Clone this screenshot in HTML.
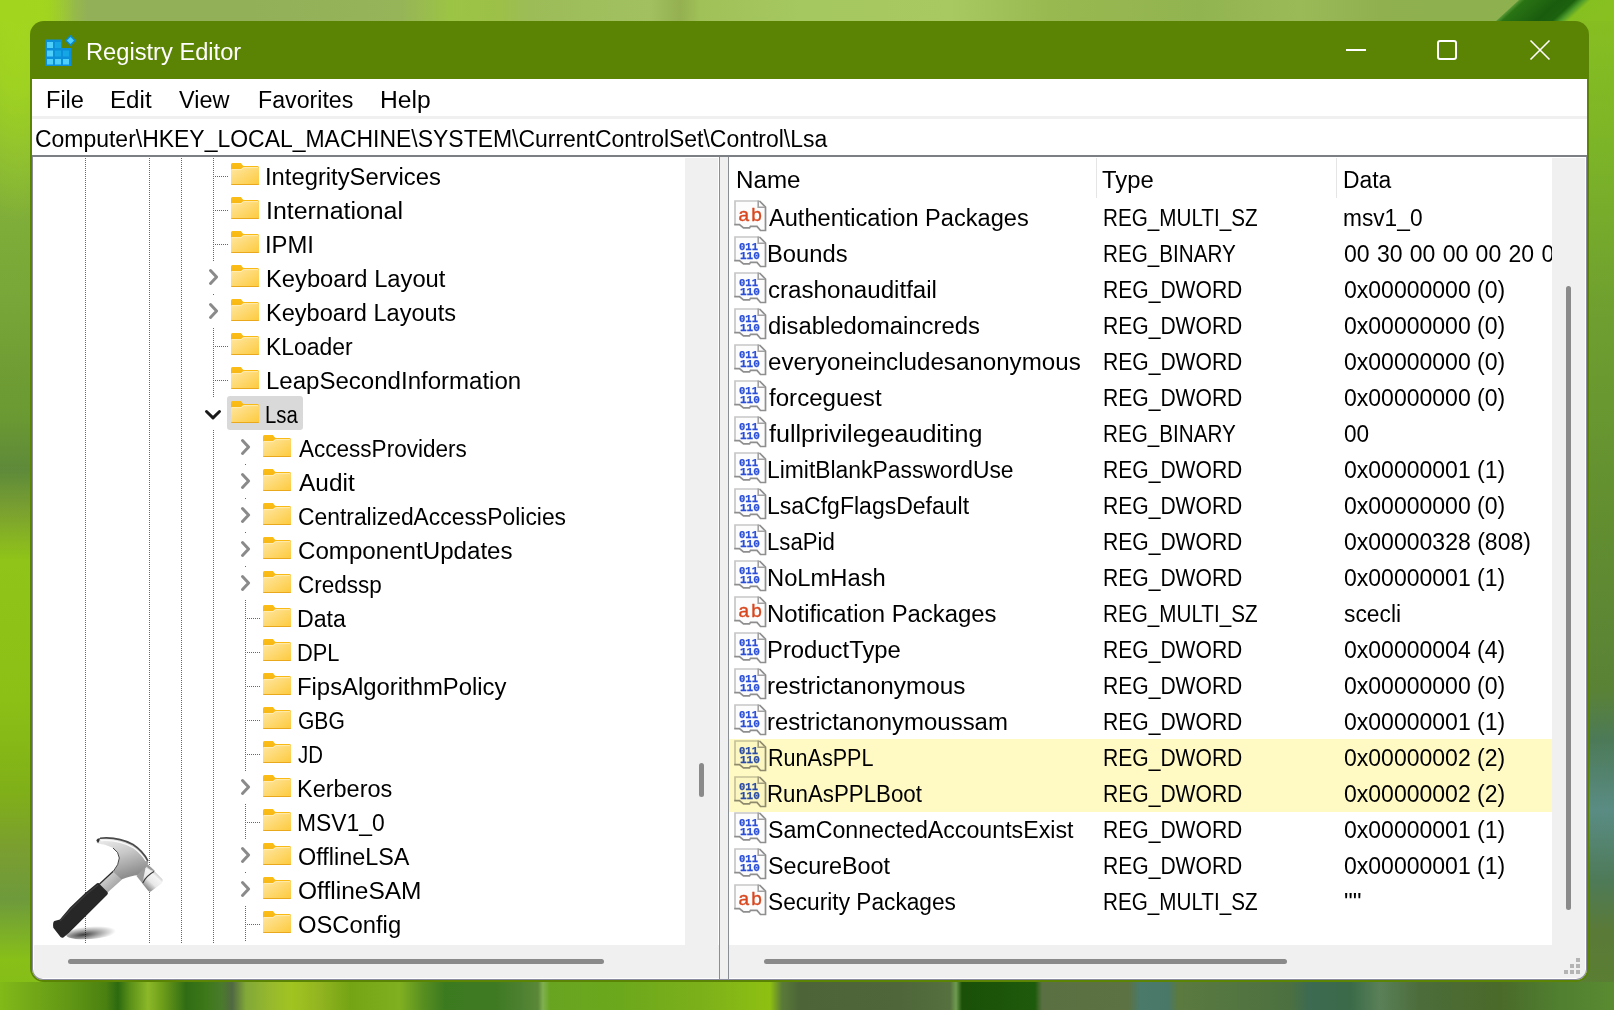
<!DOCTYPE html><html><head><meta charset="utf-8"><style>
*{margin:0;padding:0;box-sizing:border-box}
html,body{width:1614px;height:1010px;overflow:hidden}
body{position:relative;font-family:"Liberation Sans",sans-serif;background:#7aa830}
.a{position:absolute}
.t{position:absolute;font-size:23px;line-height:23px;white-space:nowrap;color:#000}
.dv{position:absolute;width:1px;background:repeating-linear-gradient(to bottom,#666 0 1px,transparent 1px 2px)}
.dh{position:absolute;height:1px;background:repeating-linear-gradient(to right,#666 0 1px,transparent 1px 2px)}
.sb{position:absolute;background:#8a8a8a;border-radius:3px}
svg{position:absolute;overflow:visible}
</style></head><body>
<svg width="0" height="0" style="position:absolute">
<defs>
<linearGradient id="fg" x1="0" y1="0" x2="1" y2="1"><stop offset="0" stop-color="#ffe7a3"/><stop offset="1" stop-color="#fdca3c"/></linearGradient>
<linearGradient id="tg" x1="0" y1="0" x2="0" y2="1"><stop offset="0" stop-color="#fbbd16"/><stop offset="1" stop-color="#f0aa12"/></linearGradient>


</defs></svg>
<div class="a" style="left:0px;top:0px;width:60px;height:1010px;background:linear-gradient(to bottom,#a0d020 0,#90c030 40px,#86b43a 150px,#78a638 300px,#6a9832 420px,#5e8a3a 470px,#7aa030 510px,#90c418 560px,#8cc016 700px,#80b018 790px,#7a9e30 850px,#6e9a3c 900px,#88c018 960px,#84bc18 1010px)"></div>
<div class="a" style="left:1570px;top:0px;width:44px;height:1010px;background:linear-gradient(to bottom,#88c020 0,#7cb428 150px,#6e9e30 320px,#628e30 520px,#5a8236 690px,#4c7a58 740px,#5a8c84 810px,#4e7a58 880px,#5a7a38 930px,#5a8030 1010px)"></div>
<div class="a" style="left:0px;top:0px;width:1614px;height:21px;background:linear-gradient(to right,#a2d41e 0px,#a0d020 45px,#98bc48 62px,#92b058 75px,#92b058 250px,#96b458 400px,#9cc444 450px,#9cc048 500px,#9cbc58 530px,#a2c060 650px,#94b050 680px,#a0c058 700px,#a6c860 800px,#a8c862 950px,#98b850 1050px,#92b450 1200px,#9aba58 1300px,#90b050 1380px,#8cb04c 1614px)"></div>
<div class="a" style="left:1519px;top:0;width:120px;height:21px;transform-origin:0 0;transform:skewX(-47.5deg);background:linear-gradient(to right,#5a9a38 0,#2a7414 6px,#1a5c0e 40px,#1c620e 56px,#4c9a2a 64px,#86c020 72px,#88c020 120px)"></div>
<div class="a" style="left:0px;top:982px;width:1614px;height:28px;background:linear-gradient(to right,#82ba18 0px,#76ac18 25px,#5e9414 75px,#4a8010 106px,#2c6a10 118px,#5a9018 130px,#8cb828 148px,#6a9a18 164px,#306c14 186px,#3c7818 205px,#4a7a2c 222px,#506842 232px,#82a838 246px,#98ba2c 272px,#a2c420 292px,#92b420 320px,#74a414 350px,#80b020 400px,#5a9020 422px,#3c7a20 445px,#3e7a22 495px,#4c8030 520px,#5a8838 538px,#80b050 543px,#68a420 550px,#6ca81c 620px,#7cb01a 700px,#8ec012 770px,#5a7a38 782px,#4c6438 800px,#4e663a 900px,#56703e 950px,#6e9c50 956px,#1a5008 962px,#1e5a0c 1035px,#5a7042 1042px,#5c7242 1128px,#4a7a6a 1140px,#4a7868 1168px,#5a7a40 1178px,#4c7040 1290px,#3c6a52 1310px,#3a6a48 1350px,#5a8058 1380px,#4c6c3a 1420px,#4a6a2a 1500px,#508030 1560px,#5a8a30 1614px)"></div>
<div class="a" style="left:0;top:0;width:160px;height:260px;background:radial-gradient(ellipse 70px 200px at 18px 20px,rgba(162,214,30,1) 0,rgba(162,214,30,0.85) 35%,rgba(162,214,30,0) 100%)"></div>
<div class="a" style="left:30px;top:21px;width:1559px;height:961px;border-radius:14px 14px 14px 14px;background:#5b8304"></div>
<svg style="left:45px;top:31px" width="30" height="36" viewBox="0 0 30 36">
<rect x="0" y="8.5" width="17" height="26.5" fill="#0a8fd8"/>
<rect x="17" y="17" width="9" height="18" fill="#0a8fd8"/>
<g fill="#4fd0fb"><rect x="2" y="11" width="6" height="6"/><rect x="2" y="19.5" width="6" height="6"/><rect x="2" y="28" width="6" height="5.5"/>
<rect x="10" y="28" width="6" height="5.5"/><rect x="18" y="28" width="6" height="5.5"/></g>
<g fill="#15a6e6"><rect x="10" y="11" width="6" height="6"/><rect x="10" y="19.5" width="6" height="6"/><rect x="18" y="19.5" width="6" height="6"/></g>
<rect x="21.5" y="5.5" width="8" height="8" transform="rotate(45 25.5 9.5)" fill="#0a8ad0"/>
<rect x="23" y="7" width="5" height="5" transform="rotate(45 25.5 9.5)" fill="#4fd0fb"/>
</svg>
<div class="t" style="left:86.05px;top:40.7px;transform:scaleX(1.0291);transform-origin:0 0;color:#fff">Registry Editor</div>
<div class="a" style="left:1346px;top:49px;width:20px;height:2px;background:#fff"></div>
<div class="a" style="left:1437px;top:40px;width:20px;height:20px;border:2px solid #fff;border-radius:3px"></div>
<svg style="left:1530px;top:40px" width="20" height="20"><path d="M0.5 0.5L19.5 19.5M19.5 0.5L0.5 19.5" stroke="#fff" stroke-width="1.6"/></svg>
<div class="a" style="left:0;top:0;width:1614px;height:1010px;clip-path:inset(79px 27px 30px 32px round 0 0 11px 11px)">
<div class="a" style="left:32px;top:79px;width:1555px;height:901px;background:#fff"></div>
<div class="t" style="left:45.54px;top:89.3px;transform:scaleX(1.0239);transform-origin:0 0;">File</div>
<div class="t" style="left:109.88px;top:89.3px;transform:scaleX(1.0497);transform-origin:0 0;">Edit</div>
<div class="t" style="left:179.40px;top:89.3px;transform:scaleX(1.0204);transform-origin:0 0;">View</div>
<div class="t" style="left:257.79px;top:89.3px;transform:scaleX(1.0077);transform-origin:0 0;">Favorites</div>
<div class="t" style="left:379.67px;top:89.3px;transform:scaleX(1.0711);transform-origin:0 0;">Help</div>
<div class="a" style="left:32px;top:116px;width:1555px;height:3px;background:#f0f0f0"></div>
<div class="t" style="left:34.70px;top:128.4px;transform:scaleX(0.9980);transform-origin:0 0;">Computer\HKEY_LOCAL_MACHINE\SYSTEM\CurrentControlSet\Control\Lsa</div>
<div class="a" style="left:32px;top:155px;width:1555px;height:2px;background:#7c7f83"></div>
<div class="a" style="left:685px;top:158px;width:33px;height:787px;background:#f0f0f0"></div>
<div class="a" style="left:34px;top:945px;width:685px;height:33px;background:#f0f0f0"></div>
<div class="sb" style="left:699px;top:763px;width:5px;height:34px"></div>
<div class="sb" style="left:68px;top:959px;width:536px;height:5px"></div>
<div class="a" style="left:719px;top:157px;width:1px;height:822px;background:#8a8e95"></div>
<div class="a" style="left:720px;top:157px;width:8px;height:822px;background:#f0f0f0"></div>
<div class="a" style="left:728px;top:157px;width:1px;height:822px;background:#8a8e95"></div>
<div class="dv" style="left:85px;top:158px;height:786px"></div>
<div class="dv" style="left:149px;top:158px;height:786px"></div>
<div class="dv" style="left:181px;top:158px;height:786px"></div>
<div class="dv" style="left:213px;top:158px;height:2px"></div>
<div class="dv" style="left:213px;top:160px;height:34px"></div>
<div class="dh" style="left:213px;top:176px;width:15px"></div>
<svg style="left:231px;top:163px" width="28" height="22" viewBox="0 0 28 22"><path d="M1.5 0H9.8L12.3 3H26.5Q28 3 28 4.5V20.5Q28 22 26.5 22H1.5Q0 22 0 20.5V1.5Q0 0 1.5 0Z" fill="url(#tg)"/><path d="M0 6.5Q0 6 1 6H10L12.3 4H27Q28 4 28 5V20.5Q28 22 26.5 22H1.5Q0 22 0 20.5Z" fill="url(#fg)"/><path d="M0 21H28V20.8Q28 22 26.5 22H1.5Q0 22 0 20.8Z" fill="#eaa91c"/><path d="M1 6.6H10.2L12.5 4.6H27" stroke="#fff3c8" stroke-width="0.8" fill="none" opacity="0.8"/></svg>
<div class="t" style="left:264.83px;top:166.2px;transform:scaleX(1.0341);transform-origin:0 0;">IntegrityServices</div>
<div class="dv" style="left:213px;top:194px;height:34px"></div>
<div class="dh" style="left:213px;top:210px;width:15px"></div>
<svg style="left:231px;top:197px" width="28" height="22" viewBox="0 0 28 22"><path d="M1.5 0H9.8L12.3 3H26.5Q28 3 28 4.5V20.5Q28 22 26.5 22H1.5Q0 22 0 20.5V1.5Q0 0 1.5 0Z" fill="url(#tg)"/><path d="M0 6.5Q0 6 1 6H10L12.3 4H27Q28 4 28 5V20.5Q28 22 26.5 22H1.5Q0 22 0 20.5Z" fill="url(#fg)"/><path d="M0 21H28V20.8Q28 22 26.5 22H1.5Q0 22 0 20.8Z" fill="#eaa91c"/><path d="M1 6.6H10.2L12.5 4.6H27" stroke="#fff3c8" stroke-width="0.8" fill="none" opacity="0.8"/></svg>
<div class="t" style="left:265.74px;top:200.2px;transform:scaleX(1.0822);transform-origin:0 0;">International</div>
<div class="dv" style="left:213px;top:228px;height:34px"></div>
<div class="dh" style="left:213px;top:244px;width:15px"></div>
<svg style="left:231px;top:231px" width="28" height="22" viewBox="0 0 28 22"><path d="M1.5 0H9.8L12.3 3H26.5Q28 3 28 4.5V20.5Q28 22 26.5 22H1.5Q0 22 0 20.5V1.5Q0 0 1.5 0Z" fill="url(#tg)"/><path d="M0 6.5Q0 6 1 6H10L12.3 4H27Q28 4 28 5V20.5Q28 22 26.5 22H1.5Q0 22 0 20.5Z" fill="url(#fg)"/><path d="M0 21H28V20.8Q28 22 26.5 22H1.5Q0 22 0 20.8Z" fill="#eaa91c"/><path d="M1 6.6H10.2L12.5 4.6H27" stroke="#fff3c8" stroke-width="0.8" fill="none" opacity="0.8"/></svg>
<div class="t" style="left:264.82px;top:234.2px;transform:scaleX(1.0357);transform-origin:0 0;">IPMI</div>
<div class="dv" style="left:213px;top:294px;height:1px"></div>
<svg style="left:209px;top:269.4px" width="11" height="18"><path d="M1.5 1.5L7.6 8L1.5 14.5" stroke="#8a8a8a" stroke-width="3" fill="none" stroke-linecap="round" stroke-linejoin="round"/></svg>
<svg style="left:231px;top:265px" width="28" height="22" viewBox="0 0 28 22"><path d="M1.5 0H9.8L12.3 3H26.5Q28 3 28 4.5V20.5Q28 22 26.5 22H1.5Q0 22 0 20.5V1.5Q0 0 1.5 0Z" fill="url(#tg)"/><path d="M0 6.5Q0 6 1 6H10L12.3 4H27Q28 4 28 5V20.5Q28 22 26.5 22H1.5Q0 22 0 20.5Z" fill="url(#fg)"/><path d="M0 21H28V20.8Q28 22 26.5 22H1.5Q0 22 0 20.8Z" fill="#eaa91c"/><path d="M1 6.6H10.2L12.5 4.6H27" stroke="#fff3c8" stroke-width="0.8" fill="none" opacity="0.8"/></svg>
<div class="t" style="left:265.73px;top:268.2px;transform:scaleX(1.0316);transform-origin:0 0;">Keyboard Layout</div>
<div class="dv" style="left:213px;top:328px;height:1px"></div>
<svg style="left:209px;top:303.4px" width="11" height="18"><path d="M1.5 1.5L7.6 8L1.5 14.5" stroke="#8a8a8a" stroke-width="3" fill="none" stroke-linecap="round" stroke-linejoin="round"/></svg>
<svg style="left:231px;top:299px" width="28" height="22" viewBox="0 0 28 22"><path d="M1.5 0H9.8L12.3 3H26.5Q28 3 28 4.5V20.5Q28 22 26.5 22H1.5Q0 22 0 20.5V1.5Q0 0 1.5 0Z" fill="url(#tg)"/><path d="M0 6.5Q0 6 1 6H10L12.3 4H27Q28 4 28 5V20.5Q28 22 26.5 22H1.5Q0 22 0 20.5Z" fill="url(#fg)"/><path d="M0 21H28V20.8Q28 22 26.5 22H1.5Q0 22 0 20.8Z" fill="#eaa91c"/><path d="M1 6.6H10.2L12.5 4.6H27" stroke="#fff3c8" stroke-width="0.8" fill="none" opacity="0.8"/></svg>
<div class="t" style="left:265.75px;top:302.2px;transform:scaleX(1.0246);transform-origin:0 0;">Keyboard Layouts</div>
<div class="dv" style="left:213px;top:330px;height:34px"></div>
<div class="dh" style="left:213px;top:346px;width:15px"></div>
<svg style="left:231px;top:333px" width="28" height="22" viewBox="0 0 28 22"><path d="M1.5 0H9.8L12.3 3H26.5Q28 3 28 4.5V20.5Q28 22 26.5 22H1.5Q0 22 0 20.5V1.5Q0 0 1.5 0Z" fill="url(#tg)"/><path d="M0 6.5Q0 6 1 6H10L12.3 4H27Q28 4 28 5V20.5Q28 22 26.5 22H1.5Q0 22 0 20.5Z" fill="url(#fg)"/><path d="M0 21H28V20.8Q28 22 26.5 22H1.5Q0 22 0 20.8Z" fill="#eaa91c"/><path d="M1 6.6H10.2L12.5 4.6H27" stroke="#fff3c8" stroke-width="0.8" fill="none" opacity="0.8"/></svg>
<div class="t" style="left:265.81px;top:336.2px;transform:scaleX(0.9965);transform-origin:0 0;">KLoader</div>
<div class="dv" style="left:213px;top:364px;height:34px"></div>
<div class="dh" style="left:213px;top:380px;width:15px"></div>
<svg style="left:231px;top:367px" width="28" height="22" viewBox="0 0 28 22"><path d="M1.5 0H9.8L12.3 3H26.5Q28 3 28 4.5V20.5Q28 22 26.5 22H1.5Q0 22 0 20.5V1.5Q0 0 1.5 0Z" fill="url(#tg)"/><path d="M0 6.5Q0 6 1 6H10L12.3 4H27Q28 4 28 5V20.5Q28 22 26.5 22H1.5Q0 22 0 20.5Z" fill="url(#fg)"/><path d="M0 21H28V20.8Q28 22 26.5 22H1.5Q0 22 0 20.8Z" fill="#eaa91c"/><path d="M1 6.6H10.2L12.5 4.6H27" stroke="#fff3c8" stroke-width="0.8" fill="none" opacity="0.8"/></svg>
<div class="t" style="left:265.70px;top:370.2px;transform:scaleX(1.0448);transform-origin:0 0;">LeapSecondInformation</div>
<div class="dv" style="left:213px;top:430px;height:1px"></div>
<div class="a" style="left:227px;top:396px;width:76px;height:34px;background:#d9d9d9;border-radius:3px"></div>
<svg style="left:205px;top:409.7px" width="18" height="12"><path d="M1.5 1.5L8 7.8L14.5 1.5" stroke="#1a1a1a" stroke-width="3" fill="none" stroke-linecap="round" stroke-linejoin="round"/></svg>
<svg style="left:231px;top:401px" width="28" height="22" viewBox="0 0 28 22"><path d="M1.5 0H9.8L12.3 3H26.5Q28 3 28 4.5V20.5Q28 22 26.5 22H1.5Q0 22 0 20.5V1.5Q0 0 1.5 0Z" fill="url(#tg)"/><path d="M0 6.5Q0 6 1 6H10L12.3 4H27Q28 4 28 5V20.5Q28 22 26.5 22H1.5Q0 22 0 20.5Z" fill="url(#fg)"/><path d="M0 21H28V20.8Q28 22 26.5 22H1.5Q0 22 0 20.8Z" fill="#eaa91c"/><path d="M1 6.6H10.2L12.5 4.6H27" stroke="#fff3c8" stroke-width="0.8" fill="none" opacity="0.8"/></svg>
<div class="t" style="left:265.29px;top:404.2px;transform:scaleX(0.8841);transform-origin:0 0;">Lsa</div>
<div class="dv" style="left:245px;top:464px;height:1px"></div>
<svg style="left:241px;top:439.4px" width="11" height="18"><path d="M1.5 1.5L7.6 8L1.5 14.5" stroke="#8a8a8a" stroke-width="3" fill="none" stroke-linecap="round" stroke-linejoin="round"/></svg>
<svg style="left:263px;top:435px" width="28" height="22" viewBox="0 0 28 22"><path d="M1.5 0H9.8L12.3 3H26.5Q28 3 28 4.5V20.5Q28 22 26.5 22H1.5Q0 22 0 20.5V1.5Q0 0 1.5 0Z" fill="url(#tg)"/><path d="M0 6.5Q0 6 1 6H10L12.3 4H27Q28 4 28 5V20.5Q28 22 26.5 22H1.5Q0 22 0 20.5Z" fill="url(#fg)"/><path d="M0 21H28V20.8Q28 22 26.5 22H1.5Q0 22 0 20.8Z" fill="#eaa91c"/><path d="M1 6.6H10.2L12.5 4.6H27" stroke="#fff3c8" stroke-width="0.8" fill="none" opacity="0.8"/></svg>
<div class="t" style="left:299.10px;top:438.2px;transform:scaleX(0.9795);transform-origin:0 0;">AccessProviders</div>
<div class="dv" style="left:245px;top:498px;height:1px"></div>
<svg style="left:241px;top:473.4px" width="11" height="18"><path d="M1.5 1.5L7.6 8L1.5 14.5" stroke="#8a8a8a" stroke-width="3" fill="none" stroke-linecap="round" stroke-linejoin="round"/></svg>
<svg style="left:263px;top:469px" width="28" height="22" viewBox="0 0 28 22"><path d="M1.5 0H9.8L12.3 3H26.5Q28 3 28 4.5V20.5Q28 22 26.5 22H1.5Q0 22 0 20.5V1.5Q0 0 1.5 0Z" fill="url(#tg)"/><path d="M0 6.5Q0 6 1 6H10L12.3 4H27Q28 4 28 5V20.5Q28 22 26.5 22H1.5Q0 22 0 20.5Z" fill="url(#fg)"/><path d="M0 21H28V20.8Q28 22 26.5 22H1.5Q0 22 0 20.8Z" fill="#eaa91c"/><path d="M1 6.6H10.2L12.5 4.6H27" stroke="#fff3c8" stroke-width="0.8" fill="none" opacity="0.8"/></svg>
<div class="t" style="left:298.70px;top:472.2px;transform:scaleX(1.0620);transform-origin:0 0;">Audit</div>
<div class="dv" style="left:245px;top:532px;height:1px"></div>
<svg style="left:241px;top:507.4px" width="11" height="18"><path d="M1.5 1.5L7.6 8L1.5 14.5" stroke="#8a8a8a" stroke-width="3" fill="none" stroke-linecap="round" stroke-linejoin="round"/></svg>
<svg style="left:263px;top:503px" width="28" height="22" viewBox="0 0 28 22"><path d="M1.5 0H9.8L12.3 3H26.5Q28 3 28 4.5V20.5Q28 22 26.5 22H1.5Q0 22 0 20.5V1.5Q0 0 1.5 0Z" fill="url(#tg)"/><path d="M0 6.5Q0 6 1 6H10L12.3 4H27Q28 4 28 5V20.5Q28 22 26.5 22H1.5Q0 22 0 20.5Z" fill="url(#fg)"/><path d="M0 21H28V20.8Q28 22 26.5 22H1.5Q0 22 0 20.8Z" fill="#eaa91c"/><path d="M1 6.6H10.2L12.5 4.6H27" stroke="#fff3c8" stroke-width="0.8" fill="none" opacity="0.8"/></svg>
<div class="t" style="left:297.71px;top:506.2px;transform:scaleX(0.9937);transform-origin:0 0;">CentralizedAccessPolicies</div>
<div class="dv" style="left:245px;top:566px;height:1px"></div>
<svg style="left:241px;top:541.4px" width="11" height="18"><path d="M1.5 1.5L7.6 8L1.5 14.5" stroke="#8a8a8a" stroke-width="3" fill="none" stroke-linecap="round" stroke-linejoin="round"/></svg>
<svg style="left:263px;top:537px" width="28" height="22" viewBox="0 0 28 22"><path d="M1.5 0H9.8L12.3 3H26.5Q28 3 28 4.5V20.5Q28 22 26.5 22H1.5Q0 22 0 20.5V1.5Q0 0 1.5 0Z" fill="url(#tg)"/><path d="M0 6.5Q0 6 1 6H10L12.3 4H27Q28 4 28 5V20.5Q28 22 26.5 22H1.5Q0 22 0 20.5Z" fill="url(#fg)"/><path d="M0 21H28V20.8Q28 22 26.5 22H1.5Q0 22 0 20.8Z" fill="#eaa91c"/><path d="M1 6.6H10.2L12.5 4.6H27" stroke="#fff3c8" stroke-width="0.8" fill="none" opacity="0.8"/></svg>
<div class="t" style="left:297.65px;top:540.2px;transform:scaleX(1.0488);transform-origin:0 0;">ComponentUpdates</div>
<div class="dv" style="left:245px;top:600px;height:1px"></div>
<svg style="left:241px;top:575.4px" width="11" height="18"><path d="M1.5 1.5L7.6 8L1.5 14.5" stroke="#8a8a8a" stroke-width="3" fill="none" stroke-linecap="round" stroke-linejoin="round"/></svg>
<svg style="left:263px;top:571px" width="28" height="22" viewBox="0 0 28 22"><path d="M1.5 0H9.8L12.3 3H26.5Q28 3 28 4.5V20.5Q28 22 26.5 22H1.5Q0 22 0 20.5V1.5Q0 0 1.5 0Z" fill="url(#tg)"/><path d="M0 6.5Q0 6 1 6H10L12.3 4H27Q28 4 28 5V20.5Q28 22 26.5 22H1.5Q0 22 0 20.5Z" fill="url(#fg)"/><path d="M0 21H28V20.8Q28 22 26.5 22H1.5Q0 22 0 20.8Z" fill="#eaa91c"/><path d="M1 6.6H10.2L12.5 4.6H27" stroke="#fff3c8" stroke-width="0.8" fill="none" opacity="0.8"/></svg>
<div class="t" style="left:297.73px;top:574.2px;transform:scaleX(0.9763);transform-origin:0 0;">Credssp</div>
<div class="dv" style="left:245px;top:602px;height:34px"></div>
<div class="dh" style="left:245px;top:618px;width:15px"></div>
<svg style="left:263px;top:605px" width="28" height="22" viewBox="0 0 28 22"><path d="M1.5 0H9.8L12.3 3H26.5Q28 3 28 4.5V20.5Q28 22 26.5 22H1.5Q0 22 0 20.5V1.5Q0 0 1.5 0Z" fill="url(#tg)"/><path d="M0 6.5Q0 6 1 6H10L12.3 4H27Q28 4 28 5V20.5Q28 22 26.5 22H1.5Q0 22 0 20.5Z" fill="url(#fg)"/><path d="M0 21H28V20.8Q28 22 26.5 22H1.5Q0 22 0 20.8Z" fill="#eaa91c"/><path d="M1 6.6H10.2L12.5 4.6H27" stroke="#fff3c8" stroke-width="0.8" fill="none" opacity="0.8"/></svg>
<div class="t" style="left:296.69px;top:608.2px;transform:scaleX(1.0071);transform-origin:0 0;">Data</div>
<div class="dv" style="left:245px;top:636px;height:34px"></div>
<div class="dh" style="left:245px;top:652px;width:15px"></div>
<svg style="left:263px;top:639px" width="28" height="22" viewBox="0 0 28 22"><path d="M1.5 0H9.8L12.3 3H26.5Q28 3 28 4.5V20.5Q28 22 26.5 22H1.5Q0 22 0 20.5V1.5Q0 0 1.5 0Z" fill="url(#tg)"/><path d="M0 6.5Q0 6 1 6H10L12.3 4H27Q28 4 28 5V20.5Q28 22 26.5 22H1.5Q0 22 0 20.5Z" fill="url(#fg)"/><path d="M0 21H28V20.8Q28 22 26.5 22H1.5Q0 22 0 20.8Z" fill="#eaa91c"/><path d="M1 6.6H10.2L12.5 4.6H27" stroke="#fff3c8" stroke-width="0.8" fill="none" opacity="0.8"/></svg>
<div class="t" style="left:296.79px;top:642.2px;transform:scaleX(0.9485);transform-origin:0 0;">DPL</div>
<div class="dv" style="left:245px;top:670px;height:34px"></div>
<div class="dh" style="left:245px;top:686px;width:15px"></div>
<svg style="left:263px;top:673px" width="28" height="22" viewBox="0 0 28 22"><path d="M1.5 0H9.8L12.3 3H26.5Q28 3 28 4.5V20.5Q28 22 26.5 22H1.5Q0 22 0 20.5V1.5Q0 0 1.5 0Z" fill="url(#tg)"/><path d="M0 6.5Q0 6 1 6H10L12.3 4H27Q28 4 28 5V20.5Q28 22 26.5 22H1.5Q0 22 0 20.5Z" fill="url(#fg)"/><path d="M0 21H28V20.8Q28 22 26.5 22H1.5Q0 22 0 20.8Z" fill="#eaa91c"/><path d="M1 6.6H10.2L12.5 4.6H27" stroke="#fff3c8" stroke-width="0.8" fill="none" opacity="0.8"/></svg>
<div class="t" style="left:296.63px;top:676.2px;transform:scaleX(1.0370);transform-origin:0 0;">FipsAlgorithmPolicy</div>
<div class="dv" style="left:245px;top:704px;height:34px"></div>
<div class="dh" style="left:245px;top:720px;width:15px"></div>
<svg style="left:263px;top:707px" width="28" height="22" viewBox="0 0 28 22"><path d="M1.5 0H9.8L12.3 3H26.5Q28 3 28 4.5V20.5Q28 22 26.5 22H1.5Q0 22 0 20.5V1.5Q0 0 1.5 0Z" fill="url(#tg)"/><path d="M0 6.5Q0 6 1 6H10L12.3 4H27Q28 4 28 5V20.5Q28 22 26.5 22H1.5Q0 22 0 20.5Z" fill="url(#fg)"/><path d="M0 21H28V20.8Q28 22 26.5 22H1.5Q0 22 0 20.8Z" fill="#eaa91c"/><path d="M1 6.6H10.2L12.5 4.6H27" stroke="#fff3c8" stroke-width="0.8" fill="none" opacity="0.8"/></svg>
<div class="t" style="left:297.79px;top:710.2px;transform:scaleX(0.9152);transform-origin:0 0;">GBG</div>
<div class="dv" style="left:245px;top:738px;height:34px"></div>
<div class="dh" style="left:245px;top:754px;width:15px"></div>
<svg style="left:263px;top:741px" width="28" height="22" viewBox="0 0 28 22"><path d="M1.5 0H9.8L12.3 3H26.5Q28 3 28 4.5V20.5Q28 22 26.5 22H1.5Q0 22 0 20.5V1.5Q0 0 1.5 0Z" fill="url(#tg)"/><path d="M0 6.5Q0 6 1 6H10L12.3 4H27Q28 4 28 5V20.5Q28 22 26.5 22H1.5Q0 22 0 20.5Z" fill="url(#fg)"/><path d="M0 21H28V20.8Q28 22 26.5 22H1.5Q0 22 0 20.8Z" fill="#eaa91c"/><path d="M1 6.6H10.2L12.5 4.6H27" stroke="#fff3c8" stroke-width="0.8" fill="none" opacity="0.8"/></svg>
<div class="t" style="left:298.22px;top:744.2px;transform:scaleX(0.8846);transform-origin:0 0;">JD</div>
<div class="dv" style="left:245px;top:804px;height:1px"></div>
<svg style="left:241px;top:779.4px" width="11" height="18"><path d="M1.5 1.5L7.6 8L1.5 14.5" stroke="#8a8a8a" stroke-width="3" fill="none" stroke-linecap="round" stroke-linejoin="round"/></svg>
<svg style="left:263px;top:775px" width="28" height="22" viewBox="0 0 28 22"><path d="M1.5 0H9.8L12.3 3H26.5Q28 3 28 4.5V20.5Q28 22 26.5 22H1.5Q0 22 0 20.5V1.5Q0 0 1.5 0Z" fill="url(#tg)"/><path d="M0 6.5Q0 6 1 6H10L12.3 4H27Q28 4 28 5V20.5Q28 22 26.5 22H1.5Q0 22 0 20.5Z" fill="url(#fg)"/><path d="M0 21H28V20.8Q28 22 26.5 22H1.5Q0 22 0 20.8Z" fill="#eaa91c"/><path d="M1 6.6H10.2L12.5 4.6H27" stroke="#fff3c8" stroke-width="0.8" fill="none" opacity="0.8"/></svg>
<div class="t" style="left:296.66px;top:778.2px;transform:scaleX(1.0213);transform-origin:0 0;">Kerberos</div>
<div class="dv" style="left:245px;top:806px;height:34px"></div>
<div class="dh" style="left:245px;top:822px;width:15px"></div>
<svg style="left:263px;top:809px" width="28" height="22" viewBox="0 0 28 22"><path d="M1.5 0H9.8L12.3 3H26.5Q28 3 28 4.5V20.5Q28 22 26.5 22H1.5Q0 22 0 20.5V1.5Q0 0 1.5 0Z" fill="url(#tg)"/><path d="M0 6.5Q0 6 1 6H10L12.3 4H27Q28 4 28 5V20.5Q28 22 26.5 22H1.5Q0 22 0 20.5Z" fill="url(#fg)"/><path d="M0 21H28V20.8Q28 22 26.5 22H1.5Q0 22 0 20.8Z" fill="#eaa91c"/><path d="M1 6.6H10.2L12.5 4.6H27" stroke="#fff3c8" stroke-width="0.8" fill="none" opacity="0.8"/></svg>
<div class="t" style="left:296.71px;top:812.2px;transform:scaleX(0.9931);transform-origin:0 0;">MSV1_0</div>
<div class="dv" style="left:245px;top:872px;height:1px"></div>
<svg style="left:241px;top:847.4px" width="11" height="18"><path d="M1.5 1.5L7.6 8L1.5 14.5" stroke="#8a8a8a" stroke-width="3" fill="none" stroke-linecap="round" stroke-linejoin="round"/></svg>
<svg style="left:263px;top:843px" width="28" height="22" viewBox="0 0 28 22"><path d="M1.5 0H9.8L12.3 3H26.5Q28 3 28 4.5V20.5Q28 22 26.5 22H1.5Q0 22 0 20.5V1.5Q0 0 1.5 0Z" fill="url(#tg)"/><path d="M0 6.5Q0 6 1 6H10L12.3 4H27Q28 4 28 5V20.5Q28 22 26.5 22H1.5Q0 22 0 20.5Z" fill="url(#fg)"/><path d="M0 21H28V20.8Q28 22 26.5 22H1.5Q0 22 0 20.8Z" fill="#eaa91c"/><path d="M1 6.6H10.2L12.5 4.6H27" stroke="#fff3c8" stroke-width="0.8" fill="none" opacity="0.8"/></svg>
<div class="t" style="left:297.68px;top:846.2px;transform:scaleX(1.0177);transform-origin:0 0;">OfflineLSA</div>
<div class="dv" style="left:245px;top:906px;height:1px"></div>
<svg style="left:241px;top:881.4px" width="11" height="18"><path d="M1.5 1.5L7.6 8L1.5 14.5" stroke="#8a8a8a" stroke-width="3" fill="none" stroke-linecap="round" stroke-linejoin="round"/></svg>
<svg style="left:263px;top:877px" width="28" height="22" viewBox="0 0 28 22"><path d="M1.5 0H9.8L12.3 3H26.5Q28 3 28 4.5V20.5Q28 22 26.5 22H1.5Q0 22 0 20.5V1.5Q0 0 1.5 0Z" fill="url(#tg)"/><path d="M0 6.5Q0 6 1 6H10L12.3 4H27Q28 4 28 5V20.5Q28 22 26.5 22H1.5Q0 22 0 20.5Z" fill="url(#fg)"/><path d="M0 21H28V20.8Q28 22 26.5 22H1.5Q0 22 0 20.8Z" fill="#eaa91c"/><path d="M1 6.6H10.2L12.5 4.6H27" stroke="#fff3c8" stroke-width="0.8" fill="none" opacity="0.8"/></svg>
<div class="t" style="left:297.63px;top:880.2px;transform:scaleX(1.0656);transform-origin:0 0;">OfflineSAM</div>
<div class="dv" style="left:245px;top:908px;height:34px"></div>
<div class="dh" style="left:245px;top:924px;width:15px"></div>
<svg style="left:263px;top:911px" width="28" height="22" viewBox="0 0 28 22"><path d="M1.5 0H9.8L12.3 3H26.5Q28 3 28 4.5V20.5Q28 22 26.5 22H1.5Q0 22 0 20.5V1.5Q0 0 1.5 0Z" fill="url(#tg)"/><path d="M0 6.5Q0 6 1 6H10L12.3 4H27Q28 4 28 5V20.5Q28 22 26.5 22H1.5Q0 22 0 20.5Z" fill="url(#fg)"/><path d="M0 21H28V20.8Q28 22 26.5 22H1.5Q0 22 0 20.8Z" fill="#eaa91c"/><path d="M1 6.6H10.2L12.5 4.6H27" stroke="#fff3c8" stroke-width="0.8" fill="none" opacity="0.8"/></svg>
<div class="t" style="left:297.66px;top:914.2px;transform:scaleX(1.0342);transform-origin:0 0;">OSConfig</div>
<div class="dv" style="left:213px;top:430px;height:514px"></div>
<div class="a" style="left:1096px;top:158px;width:1px;height:40px;background:#e5e5e5"></div>
<div class="a" style="left:1336px;top:158px;width:1px;height:40px;background:#e5e5e5"></div>
<div class="t" style="left:735.59px;top:169.3px;transform:scaleX(1.0504);transform-origin:0 0;">Name</div>
<div class="t" style="left:1101.87px;top:169.3px;transform:scaleX(1.0356);transform-origin:0 0;">Type</div>
<div class="t" style="left:1342.72px;top:169.3px;transform:scaleX(0.9937);transform-origin:0 0;">Data</div>
<svg style="left:734px;top:200px" width="32" height="32" viewBox="0 0 32 32"><path d="M1 1H25.5L31.5 7V30.5H26.5L23 26.4H16.5L15.5 27.9H9.5L5.5 24.7H1Z" fill="#fcfcfc"/><path d="M1 24.7V1H25.5" stroke="#c6c6c6" stroke-width="1.7" fill="none"/><path d="M25.5 1L31.5 7V30.5H26.5L23 26.4H16.5L15.5 27.9H9.5L5.5 24.7H0.2" stroke="#8e8e8e" stroke-width="1.7" fill="none"/><path d="M24.2 0.5V7.3H31" stroke="#a2a2a2" stroke-width="1.6" fill="none"/><text x="4.6" y="20.8" font-family="Liberation Sans" font-size="19" fill="#d8461e" stroke="#d8461e" stroke-width="0.35">a</text><text x="17.2" y="20.8" font-family="Liberation Sans" font-size="19" fill="#d8461e" stroke="#d8461e" stroke-width="0.35">b</text></svg>
<div class="t" style="left:769.40px;top:207.4px;transform:scaleX(1.0258);transform-origin:0 0;">Authentication Packages</div>
<div class="t" style="left:1103.11px;top:207.4px;transform:scaleX(0.8983);transform-origin:0 0;">REG_MULTI_SZ</div>
<div class="a" style="left:1343px;top:199px;width:209px;height:36px;overflow:hidden"><div class="t" style="left:-0.08px;top:8.4px;transform:scaleX(0.9873);transform-origin:0 0;">msv1_0</div></div>
<svg style="left:734px;top:236px" width="32" height="32" viewBox="0 0 32 32"><path d="M1 1H25.5L31.5 7V30.5H26.5L23 26.4H16.5L15.5 27.9H9.5L5.5 24.7H1Z" fill="#fcfcfc"/><path d="M1 24.7V1H25.5" stroke="#c6c6c6" stroke-width="1.7" fill="none"/><path d="M25.5 1L31.5 7V30.5H26.5L23 26.4H16.5L15.5 27.9H9.5L5.5 24.7H0.2" stroke="#8e8e8e" stroke-width="1.7" fill="none"/><path d="M24.2 0.5V7.3H31" stroke="#a2a2a2" stroke-width="1.6" fill="none"/><text x="5" y="13.9" font-family="Liberation Mono" font-weight="bold" font-size="11.8" textLength="19" lengthAdjust="spacingAndGlyphs" fill="#2a4ed8" stroke="#2a4ed8" stroke-width="0.25">011</text><text x="5.9" y="23.4" font-family="Liberation Mono" font-weight="bold" font-size="11.8" textLength="20" lengthAdjust="spacingAndGlyphs" fill="#2a4ed8" stroke="#2a4ed8" stroke-width="0.25">110</text></svg>
<div class="t" style="left:767.32px;top:243.4px;transform:scaleX(1.0336);transform-origin:0 0;">Bounds</div>
<div class="t" style="left:1103.11px;top:243.4px;transform:scaleX(0.8986);transform-origin:0 0;">REG_BINARY</div>
<div class="a" style="left:1343px;top:235px;width:209px;height:36px;overflow:hidden"><div class="t" style="left:0.90px;top:8.4px;transform:scaleX(1.0007);transform-origin:0 0;word-spacing:0.9px;">00 30 00 00 00 20 00 00 00</div></div>
<svg style="left:734px;top:272px" width="32" height="32" viewBox="0 0 32 32"><path d="M1 1H25.5L31.5 7V30.5H26.5L23 26.4H16.5L15.5 27.9H9.5L5.5 24.7H1Z" fill="#fcfcfc"/><path d="M1 24.7V1H25.5" stroke="#c6c6c6" stroke-width="1.7" fill="none"/><path d="M25.5 1L31.5 7V30.5H26.5L23 26.4H16.5L15.5 27.9H9.5L5.5 24.7H0.2" stroke="#8e8e8e" stroke-width="1.7" fill="none"/><path d="M24.2 0.5V7.3H31" stroke="#a2a2a2" stroke-width="1.6" fill="none"/><text x="5" y="13.9" font-family="Liberation Mono" font-weight="bold" font-size="11.8" textLength="19" lengthAdjust="spacingAndGlyphs" fill="#2a4ed8" stroke="#2a4ed8" stroke-width="0.25">011</text><text x="5.9" y="23.4" font-family="Liberation Mono" font-weight="bold" font-size="11.8" textLength="20" lengthAdjust="spacingAndGlyphs" fill="#2a4ed8" stroke="#2a4ed8" stroke-width="0.25">110</text></svg>
<div class="t" style="left:768.35px;top:279.4px;transform:scaleX(1.0488);transform-origin:0 0;">crashonauditfail</div>
<div class="t" style="left:1103.07px;top:279.4px;transform:scaleX(0.9162);transform-origin:0 0;">REG_DWORD</div>
<div class="a" style="left:1343px;top:271px;width:209px;height:36px;overflow:hidden"><div class="t" style="left:0.90px;top:8.4px;transform:scaleX(1.0007);transform-origin:0 0;">0x00000000 (0)</div></div>
<svg style="left:734px;top:308px" width="32" height="32" viewBox="0 0 32 32"><path d="M1 1H25.5L31.5 7V30.5H26.5L23 26.4H16.5L15.5 27.9H9.5L5.5 24.7H1Z" fill="#fcfcfc"/><path d="M1 24.7V1H25.5" stroke="#c6c6c6" stroke-width="1.7" fill="none"/><path d="M25.5 1L31.5 7V30.5H26.5L23 26.4H16.5L15.5 27.9H9.5L5.5 24.7H0.2" stroke="#8e8e8e" stroke-width="1.7" fill="none"/><path d="M24.2 0.5V7.3H31" stroke="#a2a2a2" stroke-width="1.6" fill="none"/><text x="5" y="13.9" font-family="Liberation Mono" font-weight="bold" font-size="11.8" textLength="19" lengthAdjust="spacingAndGlyphs" fill="#2a4ed8" stroke="#2a4ed8" stroke-width="0.25">011</text><text x="5.9" y="23.4" font-family="Liberation Mono" font-weight="bold" font-size="11.8" textLength="20" lengthAdjust="spacingAndGlyphs" fill="#2a4ed8" stroke="#2a4ed8" stroke-width="0.25">110</text></svg>
<div class="t" style="left:768.36px;top:315.4px;transform:scaleX(1.0355);transform-origin:0 0;">disabledomaincreds</div>
<div class="t" style="left:1103.07px;top:315.4px;transform:scaleX(0.9162);transform-origin:0 0;">REG_DWORD</div>
<div class="a" style="left:1343px;top:307px;width:209px;height:36px;overflow:hidden"><div class="t" style="left:0.90px;top:8.4px;transform:scaleX(1.0007);transform-origin:0 0;">0x00000000 (0)</div></div>
<svg style="left:734px;top:344px" width="32" height="32" viewBox="0 0 32 32"><path d="M1 1H25.5L31.5 7V30.5H26.5L23 26.4H16.5L15.5 27.9H9.5L5.5 24.7H1Z" fill="#fcfcfc"/><path d="M1 24.7V1H25.5" stroke="#c6c6c6" stroke-width="1.7" fill="none"/><path d="M25.5 1L31.5 7V30.5H26.5L23 26.4H16.5L15.5 27.9H9.5L5.5 24.7H0.2" stroke="#8e8e8e" stroke-width="1.7" fill="none"/><path d="M24.2 0.5V7.3H31" stroke="#a2a2a2" stroke-width="1.6" fill="none"/><text x="5" y="13.9" font-family="Liberation Mono" font-weight="bold" font-size="11.8" textLength="19" lengthAdjust="spacingAndGlyphs" fill="#2a4ed8" stroke="#2a4ed8" stroke-width="0.25">011</text><text x="5.9" y="23.4" font-family="Liberation Mono" font-weight="bold" font-size="11.8" textLength="20" lengthAdjust="spacingAndGlyphs" fill="#2a4ed8" stroke="#2a4ed8" stroke-width="0.25">110</text></svg>
<div class="t" style="left:768.35px;top:351.4px;transform:scaleX(1.0497);transform-origin:0 0;">everyoneincludesanonymous</div>
<div class="t" style="left:1103.07px;top:351.4px;transform:scaleX(0.9162);transform-origin:0 0;">REG_DWORD</div>
<div class="a" style="left:1343px;top:343px;width:209px;height:36px;overflow:hidden"><div class="t" style="left:0.90px;top:8.4px;transform:scaleX(1.0007);transform-origin:0 0;">0x00000000 (0)</div></div>
<svg style="left:734px;top:380px" width="32" height="32" viewBox="0 0 32 32"><path d="M1 1H25.5L31.5 7V30.5H26.5L23 26.4H16.5L15.5 27.9H9.5L5.5 24.7H1Z" fill="#fcfcfc"/><path d="M1 24.7V1H25.5" stroke="#c6c6c6" stroke-width="1.7" fill="none"/><path d="M25.5 1L31.5 7V30.5H26.5L23 26.4H16.5L15.5 27.9H9.5L5.5 24.7H0.2" stroke="#8e8e8e" stroke-width="1.7" fill="none"/><path d="M24.2 0.5V7.3H31" stroke="#a2a2a2" stroke-width="1.6" fill="none"/><text x="5" y="13.9" font-family="Liberation Mono" font-weight="bold" font-size="11.8" textLength="19" lengthAdjust="spacingAndGlyphs" fill="#2a4ed8" stroke="#2a4ed8" stroke-width="0.25">011</text><text x="5.9" y="23.4" font-family="Liberation Mono" font-weight="bold" font-size="11.8" textLength="20" lengthAdjust="spacingAndGlyphs" fill="#2a4ed8" stroke="#2a4ed8" stroke-width="0.25">110</text></svg>
<div class="t" style="left:769.40px;top:387.4px;transform:scaleX(1.0487);transform-origin:0 0;">forceguest</div>
<div class="t" style="left:1103.07px;top:387.4px;transform:scaleX(0.9162);transform-origin:0 0;">REG_DWORD</div>
<div class="a" style="left:1343px;top:379px;width:209px;height:36px;overflow:hidden"><div class="t" style="left:0.90px;top:8.4px;transform:scaleX(1.0007);transform-origin:0 0;">0x00000000 (0)</div></div>
<svg style="left:734px;top:416px" width="32" height="32" viewBox="0 0 32 32"><path d="M1 1H25.5L31.5 7V30.5H26.5L23 26.4H16.5L15.5 27.9H9.5L5.5 24.7H1Z" fill="#fcfcfc"/><path d="M1 24.7V1H25.5" stroke="#c6c6c6" stroke-width="1.7" fill="none"/><path d="M25.5 1L31.5 7V30.5H26.5L23 26.4H16.5L15.5 27.9H9.5L5.5 24.7H0.2" stroke="#8e8e8e" stroke-width="1.7" fill="none"/><path d="M24.2 0.5V7.3H31" stroke="#a2a2a2" stroke-width="1.6" fill="none"/><text x="5" y="13.9" font-family="Liberation Mono" font-weight="bold" font-size="11.8" textLength="19" lengthAdjust="spacingAndGlyphs" fill="#2a4ed8" stroke="#2a4ed8" stroke-width="0.25">011</text><text x="5.9" y="23.4" font-family="Liberation Mono" font-weight="bold" font-size="11.8" textLength="20" lengthAdjust="spacingAndGlyphs" fill="#2a4ed8" stroke="#2a4ed8" stroke-width="0.25">110</text></svg>
<div class="t" style="left:769.39px;top:423.4px;transform:scaleX(1.0908);transform-origin:0 0;">fullprivilegeauditing</div>
<div class="t" style="left:1103.11px;top:423.4px;transform:scaleX(0.8986);transform-origin:0 0;">REG_BINARY</div>
<div class="a" style="left:1343px;top:415px;width:209px;height:36px;overflow:hidden"><div class="t" style="left:0.91px;top:8.4px;transform:scaleX(0.9821);transform-origin:0 0;">00</div></div>
<svg style="left:734px;top:452px" width="32" height="32" viewBox="0 0 32 32"><path d="M1 1H25.5L31.5 7V30.5H26.5L23 26.4H16.5L15.5 27.9H9.5L5.5 24.7H1Z" fill="#fcfcfc"/><path d="M1 24.7V1H25.5" stroke="#c6c6c6" stroke-width="1.7" fill="none"/><path d="M25.5 1L31.5 7V30.5H26.5L23 26.4H16.5L15.5 27.9H9.5L5.5 24.7H0.2" stroke="#8e8e8e" stroke-width="1.7" fill="none"/><path d="M24.2 0.5V7.3H31" stroke="#a2a2a2" stroke-width="1.6" fill="none"/><text x="5" y="13.9" font-family="Liberation Mono" font-weight="bold" font-size="11.8" textLength="19" lengthAdjust="spacingAndGlyphs" fill="#2a4ed8" stroke="#2a4ed8" stroke-width="0.25">011</text><text x="5.9" y="23.4" font-family="Liberation Mono" font-weight="bold" font-size="11.8" textLength="20" lengthAdjust="spacingAndGlyphs" fill="#2a4ed8" stroke="#2a4ed8" stroke-width="0.25">110</text></svg>
<div class="t" style="left:767.41px;top:459.4px;transform:scaleX(0.9943);transform-origin:0 0;">LimitBlankPasswordUse</div>
<div class="t" style="left:1103.07px;top:459.4px;transform:scaleX(0.9162);transform-origin:0 0;">REG_DWORD</div>
<div class="a" style="left:1343px;top:451px;width:209px;height:36px;overflow:hidden"><div class="t" style="left:0.90px;top:8.4px;transform:scaleX(1.0007);transform-origin:0 0;">0x00000001 (1)</div></div>
<svg style="left:734px;top:488px" width="32" height="32" viewBox="0 0 32 32"><path d="M1 1H25.5L31.5 7V30.5H26.5L23 26.4H16.5L15.5 27.9H9.5L5.5 24.7H1Z" fill="#fcfcfc"/><path d="M1 24.7V1H25.5" stroke="#c6c6c6" stroke-width="1.7" fill="none"/><path d="M25.5 1L31.5 7V30.5H26.5L23 26.4H16.5L15.5 27.9H9.5L5.5 24.7H0.2" stroke="#8e8e8e" stroke-width="1.7" fill="none"/><path d="M24.2 0.5V7.3H31" stroke="#a2a2a2" stroke-width="1.6" fill="none"/><text x="5" y="13.9" font-family="Liberation Mono" font-weight="bold" font-size="11.8" textLength="19" lengthAdjust="spacingAndGlyphs" fill="#2a4ed8" stroke="#2a4ed8" stroke-width="0.25">011</text><text x="5.9" y="23.4" font-family="Liberation Mono" font-weight="bold" font-size="11.8" textLength="20" lengthAdjust="spacingAndGlyphs" fill="#2a4ed8" stroke="#2a4ed8" stroke-width="0.25">110</text></svg>
<div class="t" style="left:767.40px;top:495.4px;transform:scaleX(1.0006);transform-origin:0 0;">LsaCfgFlagsDefault</div>
<div class="t" style="left:1103.07px;top:495.4px;transform:scaleX(0.9162);transform-origin:0 0;">REG_DWORD</div>
<div class="a" style="left:1343px;top:487px;width:209px;height:36px;overflow:hidden"><div class="t" style="left:0.90px;top:8.4px;transform:scaleX(1.0007);transform-origin:0 0;">0x00000000 (0)</div></div>
<svg style="left:734px;top:524px" width="32" height="32" viewBox="0 0 32 32"><path d="M1 1H25.5L31.5 7V30.5H26.5L23 26.4H16.5L15.5 27.9H9.5L5.5 24.7H1Z" fill="#fcfcfc"/><path d="M1 24.7V1H25.5" stroke="#c6c6c6" stroke-width="1.7" fill="none"/><path d="M25.5 1L31.5 7V30.5H26.5L23 26.4H16.5L15.5 27.9H9.5L5.5 24.7H0.2" stroke="#8e8e8e" stroke-width="1.7" fill="none"/><path d="M24.2 0.5V7.3H31" stroke="#a2a2a2" stroke-width="1.6" fill="none"/><text x="5" y="13.9" font-family="Liberation Mono" font-weight="bold" font-size="11.8" textLength="19" lengthAdjust="spacingAndGlyphs" fill="#2a4ed8" stroke="#2a4ed8" stroke-width="0.25">011</text><text x="5.9" y="23.4" font-family="Liberation Mono" font-weight="bold" font-size="11.8" textLength="20" lengthAdjust="spacingAndGlyphs" fill="#2a4ed8" stroke="#2a4ed8" stroke-width="0.25">110</text></svg>
<div class="t" style="left:767.47px;top:531.4px;transform:scaleX(0.9643);transform-origin:0 0;">LsaPid</div>
<div class="t" style="left:1103.07px;top:531.4px;transform:scaleX(0.9162);transform-origin:0 0;">REG_DWORD</div>
<div class="a" style="left:1343px;top:523px;width:209px;height:36px;overflow:hidden"><div class="t" style="left:0.90px;top:8.4px;transform:scaleX(1.0011);transform-origin:0 0;">0x00000328 (808)</div></div>
<svg style="left:734px;top:560px" width="32" height="32" viewBox="0 0 32 32"><path d="M1 1H25.5L31.5 7V30.5H26.5L23 26.4H16.5L15.5 27.9H9.5L5.5 24.7H1Z" fill="#fcfcfc"/><path d="M1 24.7V1H25.5" stroke="#c6c6c6" stroke-width="1.7" fill="none"/><path d="M25.5 1L31.5 7V30.5H26.5L23 26.4H16.5L15.5 27.9H9.5L5.5 24.7H0.2" stroke="#8e8e8e" stroke-width="1.7" fill="none"/><path d="M24.2 0.5V7.3H31" stroke="#a2a2a2" stroke-width="1.6" fill="none"/><text x="5" y="13.9" font-family="Liberation Mono" font-weight="bold" font-size="11.8" textLength="19" lengthAdjust="spacingAndGlyphs" fill="#2a4ed8" stroke="#2a4ed8" stroke-width="0.25">011</text><text x="5.9" y="23.4" font-family="Liberation Mono" font-weight="bold" font-size="11.8" textLength="20" lengthAdjust="spacingAndGlyphs" fill="#2a4ed8" stroke="#2a4ed8" stroke-width="0.25">110</text></svg>
<div class="t" style="left:767.33px;top:567.4px;transform:scaleX(1.0326);transform-origin:0 0;">NoLmHash</div>
<div class="t" style="left:1103.07px;top:567.4px;transform:scaleX(0.9162);transform-origin:0 0;">REG_DWORD</div>
<div class="a" style="left:1343px;top:559px;width:209px;height:36px;overflow:hidden"><div class="t" style="left:0.90px;top:8.4px;transform:scaleX(1.0007);transform-origin:0 0;">0x00000001 (1)</div></div>
<svg style="left:734px;top:596px" width="32" height="32" viewBox="0 0 32 32"><path d="M1 1H25.5L31.5 7V30.5H26.5L23 26.4H16.5L15.5 27.9H9.5L5.5 24.7H1Z" fill="#fcfcfc"/><path d="M1 24.7V1H25.5" stroke="#c6c6c6" stroke-width="1.7" fill="none"/><path d="M25.5 1L31.5 7V30.5H26.5L23 26.4H16.5L15.5 27.9H9.5L5.5 24.7H0.2" stroke="#8e8e8e" stroke-width="1.7" fill="none"/><path d="M24.2 0.5V7.3H31" stroke="#a2a2a2" stroke-width="1.6" fill="none"/><text x="4.6" y="20.8" font-family="Liberation Sans" font-size="19" fill="#d8461e" stroke="#d8461e" stroke-width="0.35">a</text><text x="17.2" y="20.8" font-family="Liberation Sans" font-size="19" fill="#d8461e" stroke="#d8461e" stroke-width="0.35">b</text></svg>
<div class="t" style="left:767.32px;top:603.4px;transform:scaleX(1.0376);transform-origin:0 0;">Notification Packages</div>
<div class="t" style="left:1103.11px;top:603.4px;transform:scaleX(0.8983);transform-origin:0 0;">REG_MULTI_SZ</div>
<div class="a" style="left:1343px;top:595px;width:209px;height:36px;overflow:hidden"><div class="t" style="left:0.90px;top:8.4px;transform:scaleX(0.9914);transform-origin:0 0;">scecli</div></div>
<svg style="left:734px;top:632px" width="32" height="32" viewBox="0 0 32 32"><path d="M1 1H25.5L31.5 7V30.5H26.5L23 26.4H16.5L15.5 27.9H9.5L5.5 24.7H1Z" fill="#fcfcfc"/><path d="M1 24.7V1H25.5" stroke="#c6c6c6" stroke-width="1.7" fill="none"/><path d="M25.5 1L31.5 7V30.5H26.5L23 26.4H16.5L15.5 27.9H9.5L5.5 24.7H0.2" stroke="#8e8e8e" stroke-width="1.7" fill="none"/><path d="M24.2 0.5V7.3H31" stroke="#a2a2a2" stroke-width="1.6" fill="none"/><text x="5" y="13.9" font-family="Liberation Mono" font-weight="bold" font-size="11.8" textLength="19" lengthAdjust="spacingAndGlyphs" fill="#2a4ed8" stroke="#2a4ed8" stroke-width="0.25">011</text><text x="5.9" y="23.4" font-family="Liberation Mono" font-weight="bold" font-size="11.8" textLength="20" lengthAdjust="spacingAndGlyphs" fill="#2a4ed8" stroke="#2a4ed8" stroke-width="0.25">110</text></svg>
<div class="t" style="left:767.32px;top:639.4px;transform:scaleX(1.0366);transform-origin:0 0;">ProductType</div>
<div class="t" style="left:1103.07px;top:639.4px;transform:scaleX(0.9162);transform-origin:0 0;">REG_DWORD</div>
<div class="a" style="left:1343px;top:631px;width:209px;height:36px;overflow:hidden"><div class="t" style="left:0.90px;top:8.4px;transform:scaleX(1.0007);transform-origin:0 0;">0x00000004 (4)</div></div>
<svg style="left:734px;top:668px" width="32" height="32" viewBox="0 0 32 32"><path d="M1 1H25.5L31.5 7V30.5H26.5L23 26.4H16.5L15.5 27.9H9.5L5.5 24.7H1Z" fill="#fcfcfc"/><path d="M1 24.7V1H25.5" stroke="#c6c6c6" stroke-width="1.7" fill="none"/><path d="M25.5 1L31.5 7V30.5H26.5L23 26.4H16.5L15.5 27.9H9.5L5.5 24.7H0.2" stroke="#8e8e8e" stroke-width="1.7" fill="none"/><path d="M24.2 0.5V7.3H31" stroke="#a2a2a2" stroke-width="1.6" fill="none"/><text x="5" y="13.9" font-family="Liberation Mono" font-weight="bold" font-size="11.8" textLength="19" lengthAdjust="spacingAndGlyphs" fill="#2a4ed8" stroke="#2a4ed8" stroke-width="0.25">011</text><text x="5.9" y="23.4" font-family="Liberation Mono" font-weight="bold" font-size="11.8" textLength="20" lengthAdjust="spacingAndGlyphs" fill="#2a4ed8" stroke="#2a4ed8" stroke-width="0.25">110</text></svg>
<div class="t" style="left:767.28px;top:675.4px;transform:scaleX(1.0552);transform-origin:0 0;">restrictanonymous</div>
<div class="t" style="left:1103.07px;top:675.4px;transform:scaleX(0.9162);transform-origin:0 0;">REG_DWORD</div>
<div class="a" style="left:1343px;top:667px;width:209px;height:36px;overflow:hidden"><div class="t" style="left:0.90px;top:8.4px;transform:scaleX(1.0007);transform-origin:0 0;">0x00000000 (0)</div></div>
<svg style="left:734px;top:704px" width="32" height="32" viewBox="0 0 32 32"><path d="M1 1H25.5L31.5 7V30.5H26.5L23 26.4H16.5L15.5 27.9H9.5L5.5 24.7H1Z" fill="#fcfcfc"/><path d="M1 24.7V1H25.5" stroke="#c6c6c6" stroke-width="1.7" fill="none"/><path d="M25.5 1L31.5 7V30.5H26.5L23 26.4H16.5L15.5 27.9H9.5L5.5 24.7H0.2" stroke="#8e8e8e" stroke-width="1.7" fill="none"/><path d="M24.2 0.5V7.3H31" stroke="#a2a2a2" stroke-width="1.6" fill="none"/><text x="5" y="13.9" font-family="Liberation Mono" font-weight="bold" font-size="11.8" textLength="19" lengthAdjust="spacingAndGlyphs" fill="#2a4ed8" stroke="#2a4ed8" stroke-width="0.25">011</text><text x="5.9" y="23.4" font-family="Liberation Mono" font-weight="bold" font-size="11.8" textLength="20" lengthAdjust="spacingAndGlyphs" fill="#2a4ed8" stroke="#2a4ed8" stroke-width="0.25">110</text></svg>
<div class="t" style="left:767.31px;top:711.4px;transform:scaleX(1.0412);transform-origin:0 0;">restrictanonymoussam</div>
<div class="t" style="left:1103.07px;top:711.4px;transform:scaleX(0.9162);transform-origin:0 0;">REG_DWORD</div>
<div class="a" style="left:1343px;top:703px;width:209px;height:36px;overflow:hidden"><div class="t" style="left:0.90px;top:8.4px;transform:scaleX(1.0007);transform-origin:0 0;">0x00000001 (1)</div></div>
<svg style="left:734px;top:740px" width="32" height="32" viewBox="0 0 32 32"><path d="M1 1H25.5L31.5 7V30.5H26.5L23 26.4H16.5L15.5 27.9H9.5L5.5 24.7H1Z" fill="#fcfcfc"/><path d="M1 24.7V1H25.5" stroke="#c6c6c6" stroke-width="1.7" fill="none"/><path d="M25.5 1L31.5 7V30.5H26.5L23 26.4H16.5L15.5 27.9H9.5L5.5 24.7H0.2" stroke="#8e8e8e" stroke-width="1.7" fill="none"/><path d="M24.2 0.5V7.3H31" stroke="#a2a2a2" stroke-width="1.6" fill="none"/><text x="5" y="13.9" font-family="Liberation Mono" font-weight="bold" font-size="11.8" textLength="19" lengthAdjust="spacingAndGlyphs" fill="#2a4ed8" stroke="#2a4ed8" stroke-width="0.25">011</text><text x="5.9" y="23.4" font-family="Liberation Mono" font-weight="bold" font-size="11.8" textLength="20" lengthAdjust="spacingAndGlyphs" fill="#2a4ed8" stroke="#2a4ed8" stroke-width="0.25">110</text></svg>
<div class="t" style="left:767.53px;top:747.4px;transform:scaleX(0.9373);transform-origin:0 0;">RunAsPPL</div>
<div class="t" style="left:1103.07px;top:747.4px;transform:scaleX(0.9162);transform-origin:0 0;">REG_DWORD</div>
<div class="a" style="left:1343px;top:739px;width:209px;height:36px;overflow:hidden"><div class="t" style="left:0.90px;top:8.4px;transform:scaleX(1.0007);transform-origin:0 0;">0x00000002 (2)</div></div>
<svg style="left:734px;top:776px" width="32" height="32" viewBox="0 0 32 32"><path d="M1 1H25.5L31.5 7V30.5H26.5L23 26.4H16.5L15.5 27.9H9.5L5.5 24.7H1Z" fill="#fcfcfc"/><path d="M1 24.7V1H25.5" stroke="#c6c6c6" stroke-width="1.7" fill="none"/><path d="M25.5 1L31.5 7V30.5H26.5L23 26.4H16.5L15.5 27.9H9.5L5.5 24.7H0.2" stroke="#8e8e8e" stroke-width="1.7" fill="none"/><path d="M24.2 0.5V7.3H31" stroke="#a2a2a2" stroke-width="1.6" fill="none"/><text x="5" y="13.9" font-family="Liberation Mono" font-weight="bold" font-size="11.8" textLength="19" lengthAdjust="spacingAndGlyphs" fill="#2a4ed8" stroke="#2a4ed8" stroke-width="0.25">011</text><text x="5.9" y="23.4" font-family="Liberation Mono" font-weight="bold" font-size="11.8" textLength="20" lengthAdjust="spacingAndGlyphs" fill="#2a4ed8" stroke="#2a4ed8" stroke-width="0.25">110</text></svg>
<div class="t" style="left:767.45px;top:783.4px;transform:scaleX(0.9696);transform-origin:0 0;">RunAsPPLBoot</div>
<div class="t" style="left:1103.07px;top:783.4px;transform:scaleX(0.9162);transform-origin:0 0;">REG_DWORD</div>
<div class="a" style="left:1343px;top:775px;width:209px;height:36px;overflow:hidden"><div class="t" style="left:0.90px;top:8.4px;transform:scaleX(1.0007);transform-origin:0 0;">0x00000002 (2)</div></div>
<svg style="left:734px;top:812px" width="32" height="32" viewBox="0 0 32 32"><path d="M1 1H25.5L31.5 7V30.5H26.5L23 26.4H16.5L15.5 27.9H9.5L5.5 24.7H1Z" fill="#fcfcfc"/><path d="M1 24.7V1H25.5" stroke="#c6c6c6" stroke-width="1.7" fill="none"/><path d="M25.5 1L31.5 7V30.5H26.5L23 26.4H16.5L15.5 27.9H9.5L5.5 24.7H0.2" stroke="#8e8e8e" stroke-width="1.7" fill="none"/><path d="M24.2 0.5V7.3H31" stroke="#a2a2a2" stroke-width="1.6" fill="none"/><text x="5" y="13.9" font-family="Liberation Mono" font-weight="bold" font-size="11.8" textLength="19" lengthAdjust="spacingAndGlyphs" fill="#2a4ed8" stroke="#2a4ed8" stroke-width="0.25">011</text><text x="5.9" y="23.4" font-family="Liberation Mono" font-weight="bold" font-size="11.8" textLength="20" lengthAdjust="spacingAndGlyphs" fill="#2a4ed8" stroke="#2a4ed8" stroke-width="0.25">110</text></svg>
<div class="t" style="left:768.39px;top:819.4px;transform:scaleX(1.0080);transform-origin:0 0;">SamConnectedAccountsExist</div>
<div class="t" style="left:1103.07px;top:819.4px;transform:scaleX(0.9162);transform-origin:0 0;">REG_DWORD</div>
<div class="a" style="left:1343px;top:811px;width:209px;height:36px;overflow:hidden"><div class="t" style="left:0.90px;top:8.4px;transform:scaleX(1.0007);transform-origin:0 0;">0x00000001 (1)</div></div>
<svg style="left:734px;top:848px" width="32" height="32" viewBox="0 0 32 32"><path d="M1 1H25.5L31.5 7V30.5H26.5L23 26.4H16.5L15.5 27.9H9.5L5.5 24.7H1Z" fill="#fcfcfc"/><path d="M1 24.7V1H25.5" stroke="#c6c6c6" stroke-width="1.7" fill="none"/><path d="M25.5 1L31.5 7V30.5H26.5L23 26.4H16.5L15.5 27.9H9.5L5.5 24.7H0.2" stroke="#8e8e8e" stroke-width="1.7" fill="none"/><path d="M24.2 0.5V7.3H31" stroke="#a2a2a2" stroke-width="1.6" fill="none"/><text x="5" y="13.9" font-family="Liberation Mono" font-weight="bold" font-size="11.8" textLength="19" lengthAdjust="spacingAndGlyphs" fill="#2a4ed8" stroke="#2a4ed8" stroke-width="0.25">011</text><text x="5.9" y="23.4" font-family="Liberation Mono" font-weight="bold" font-size="11.8" textLength="20" lengthAdjust="spacingAndGlyphs" fill="#2a4ed8" stroke="#2a4ed8" stroke-width="0.25">110</text></svg>
<div class="t" style="left:768.38px;top:855.4px;transform:scaleX(1.0152);transform-origin:0 0;">SecureBoot</div>
<div class="t" style="left:1103.07px;top:855.4px;transform:scaleX(0.9162);transform-origin:0 0;">REG_DWORD</div>
<div class="a" style="left:1343px;top:847px;width:209px;height:36px;overflow:hidden"><div class="t" style="left:0.90px;top:8.4px;transform:scaleX(1.0007);transform-origin:0 0;">0x00000001 (1)</div></div>
<svg style="left:734px;top:884px" width="32" height="32" viewBox="0 0 32 32"><path d="M1 1H25.5L31.5 7V30.5H26.5L23 26.4H16.5L15.5 27.9H9.5L5.5 24.7H1Z" fill="#fcfcfc"/><path d="M1 24.7V1H25.5" stroke="#c6c6c6" stroke-width="1.7" fill="none"/><path d="M25.5 1L31.5 7V30.5H26.5L23 26.4H16.5L15.5 27.9H9.5L5.5 24.7H0.2" stroke="#8e8e8e" stroke-width="1.7" fill="none"/><path d="M24.2 0.5V7.3H31" stroke="#a2a2a2" stroke-width="1.6" fill="none"/><text x="4.6" y="20.8" font-family="Liberation Sans" font-size="19" fill="#d8461e" stroke="#d8461e" stroke-width="0.35">a</text><text x="17.2" y="20.8" font-family="Liberation Sans" font-size="19" fill="#d8461e" stroke="#d8461e" stroke-width="0.35">b</text></svg>
<div class="t" style="left:768.41px;top:891.4px;transform:scaleX(0.9868);transform-origin:0 0;">Security Packages</div>
<div class="t" style="left:1103.11px;top:891.4px;transform:scaleX(0.8983);transform-origin:0 0;">REG_MULTI_SZ</div>
<div class="a" style="left:1343px;top:883px;width:209px;height:36px;overflow:hidden"><div class="t" style="left:0.81px;top:8.4px;transform:scaleX(1.0741);transform-origin:0 0;">&quot;&quot;</div></div>
<div class="a" style="left:729px;top:739px;width:824px;height:73px;background:#fff9c4;mix-blend-mode:multiply"></div>
<div class="a" style="left:1552px;top:158px;width:33px;height:820px;background:#f0f0f0"></div>
<div class="a" style="left:729px;top:945px;width:856px;height:33px;background:#f0f0f0"></div>
<div class="a" style="left:32px;top:157px;width:1555px;height:823px;border:1px solid #8c8ca0;border-top:none;border-radius:0 0 11px 11px"></div>
<div class="sb" style="left:1566px;top:286px;width:5px;height:624px"></div>
<div class="sb" style="left:764px;top:959px;width:523px;height:5px"></div>
<div class="a" style="left:1564px;top:970px;width:4px;height:4px;background:#b4b4b4"></div>
<div class="a" style="left:1570px;top:970px;width:4px;height:4px;background:#b4b4b4"></div>
<div class="a" style="left:1576px;top:970px;width:4px;height:4px;background:#b4b4b4"></div>
<div class="a" style="left:1570px;top:964px;width:4px;height:4px;background:#b4b4b4"></div>
<div class="a" style="left:1576px;top:964px;width:4px;height:4px;background:#b4b4b4"></div>
<div class="a" style="left:1576px;top:958px;width:4px;height:4px;background:#b4b4b4"></div>
<svg style="left:0;top:0" width="1614" height="1010" viewBox="0 0 1614 1010">
<defs>
<radialGradient id="hsh" cx="0.28" cy="0.62" r="0.55"><stop offset="0" stop-color="#000" stop-opacity="0.75"/><stop offset="0.5" stop-color="#000" stop-opacity="0.35"/><stop offset="1" stop-color="#000" stop-opacity="0"/></radialGradient>
<linearGradient id="hhead" x1="0" y1="0" x2="0.4" y2="1"><stop offset="0" stop-color="#f2f2f2"/><stop offset="0.5" stop-color="#c8c8c8"/><stop offset="1" stop-color="#8e8e8e"/></linearGradient>
<linearGradient id="hneck" x1="0" y1="0" x2="1" y2="1"><stop offset="0" stop-color="#555"/><stop offset="0.35" stop-color="#c8c8c8"/><stop offset="1" stop-color="#8a8a8a"/></linearGradient>
<linearGradient id="hface" x1="0.1" y1="1" x2="0.9" y2="0"><stop offset="0" stop-color="#5a5a5a"/><stop offset="0.4" stop-color="#e8e8e8"/><stop offset="0.65" stop-color="#f4f4f4"/><stop offset="1" stop-color="#7a7a7a"/></linearGradient>
</defs>
<ellipse cx="96" cy="931.5" rx="30" ry="7" fill="url(#hsh)" transform="rotate(-7 96 931.5)"/>
<path d="M99 884.5L113.5 871L122 879.5L107 893Z" fill="url(#hneck)"/><path d="M99.5 884L113.5 871" stroke="#2a2a2a" stroke-width="1.2"/>
<path d="M97 883.3Q99 882.5 100 884.5L107.5 892Q108.5 894 107 895L69.3 932.5L63.4 937.4Q62 938 60.5 937L53.3 927.7Q52.5 922 54.4 921L59.9 919.4L70 907.6L85.2 893Z" fill="#272727"/>
<path d="M60 921L71 909L86 894.5L98 885" stroke="#3c3c3c" stroke-width="1.2" fill="none"/>
<path d="M96.2 840.5Q99 836.8 110.5 837Q126 838.5 138 848Q146 855 148.5 862.5L145.5 868L138.5 875Q131 875.5 121.5 879.5L113 871.5Q119.5 864 119.3 857.5Q118.5 851 112 847.5Q105 844 98 843.5Q95.5 842.5 96.2 840.5Z" fill="url(#hhead)"/>
<path d="M100 838.2Q118 836.5 133 844.5Q143 851 148 861" stroke="#4a4a4a" stroke-width="1.6" fill="none"/>
<path d="M101 840.5Q120 839.5 134 848Q142 854 146 861" stroke="#fafafa" stroke-width="1.4" fill="none"/>
<path d="M96.3 840.3Q97.5 838 100 838.3Q99.5 842 98 843.3Z" fill="#333"/>
<path d="M113.5 871Q119 864.5 119.3 858Q119 852 113 848" stroke="#333" stroke-width="0.9" fill="none"/>
<path d="M147.5 864L155 871L142.5 883.5L136.5 876Z" fill="#9a9a9a"/><path d="M146 867.5L152 872.5" stroke="#dcdcdc" stroke-width="2"/><path d="M145.5 868L154.5 871.2L162.4 879.2Q163.5 881.5 161.5 883.5L151.5 891Q149.5 892.5 148 890.5L142.3 883.4Z" fill="url(#hface)"/>
<path d="M142.8 883Q146 876 154 871.5" stroke="#3a3a3a" stroke-width="1.2" fill="none"/>
</svg>
</div>
</body></html>
